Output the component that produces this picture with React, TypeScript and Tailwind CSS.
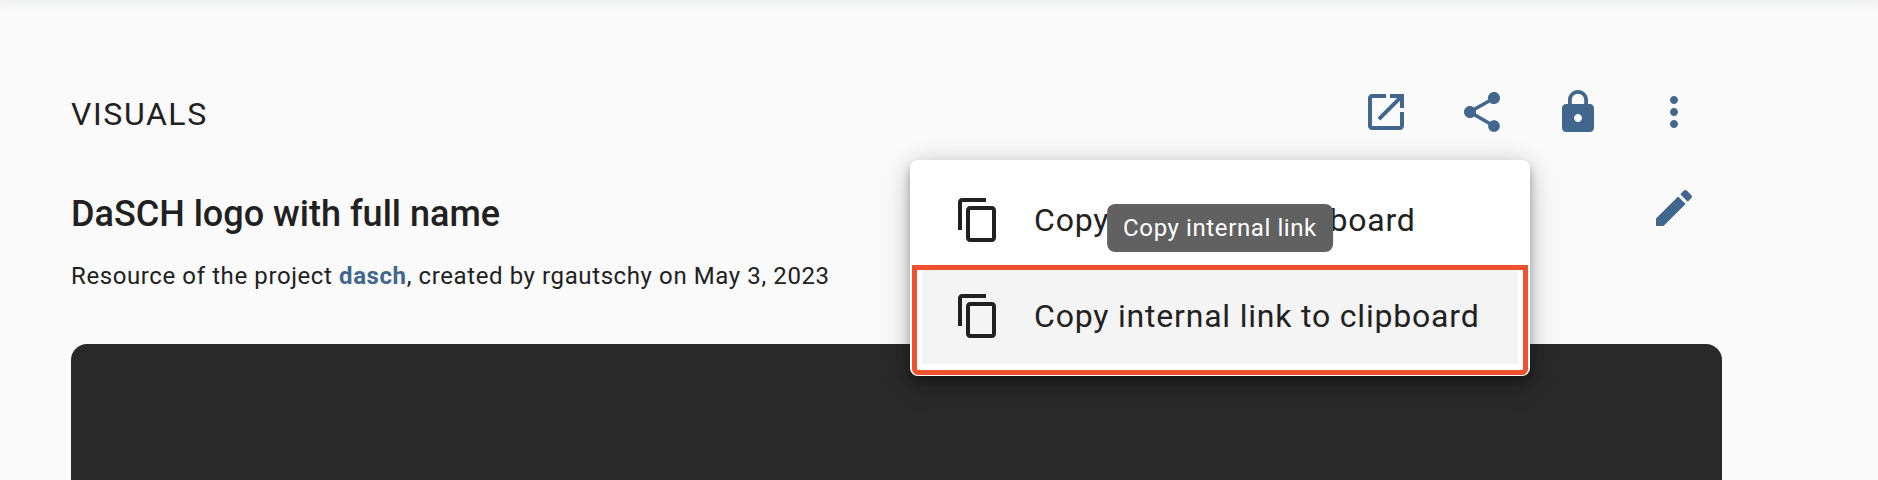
import type { ReactNode } from "react";

function Icon({ d }: { d: string }) {
  return (
    <svg viewBox="0 0 24 24" className="size-12 shrink-0 fill-current" aria-hidden="true">
      <path d={d} />
    </svg>
  );
}

const icons = {
  open: "M19 19H5V5h7V3H5c-1.11 0-2 .9-2 2v14c0 1.1.89 2 2 2h14c1.1 0 2-.9 2-2v-7h-2v7zM14 3v2h3.59l-9.83 9.83 1.41 1.41L19 6.41V10h2V3h-7z",
  share:
    "M18 16.08c-.76 0-1.44.3-1.96.77L8.91 12.7c.05-.23.09-.46.09-.7s-.04-.47-.09-.7l7.05-4.11c.54.5 1.25.81 2.04.81 1.66 0 3-1.34 3-3s-1.34-3-3-3-3 1.34-3 3c0 .24.04.47.09.7L8.04 9.81C7.5 9.31 6.79 9 6 9c-1.66 0-3 1.34-3 3s1.34 3 3 3c.79 0 1.5-.31 2.04-.81l7.12 4.16c-.05.21-.08.43-.08.65 0 1.61 1.31 2.92 2.92 2.92s2.92-1.31 2.92-2.92-1.31-2.92-2.92-2.92z",
  lock: "M18 8h-1V6c0-2.76-2.24-5-5-5S7 3.24 7 6v2H6c-1.1 0-2 .9-2 2v10c0 1.1.9 2 2 2h12c1.1 0 2-.9 2-2V10c0-1.1-.9-2-2-2zm-6 9c-1.1 0-2-.9-2-2s.9-2 2-2 2 .9 2 2-.9 2-2 2zm3.1-9H8.9V6c0-1.71 1.39-3.1 3.1-3.1 1.71 0 3.1 1.39 3.1 3.1v2z",
  more: "M12 8c1.1 0 2-.9 2-2s-.9-2-2-2-2 .9-2 2 .9 2 2 2zm0 2c-1.1 0-2 .9-2 2s.9 2 2 2 2-.9 2-2-.9-2-2-2zm0 6c-1.1 0-2 .9-2 2s.9 2 2 2 2-.9 2-2-.9-2-2-2z",
  edit: "M3 17.25V21h3.75L17.81 9.94l-3.75-3.75L3 17.25zM20.71 7.04c.39-.39.39-1.02 0-1.41l-2.34-2.34c-.39-.39-1.02-.39-1.41 0l-1.83 1.83 3.75 3.75 1.83-1.83z",
  copy: "M16 1H4c-1.1 0-2 .9-2 2v14h2V3h12V1zm3 4H8c-1.1 0-2 .9-2 2v14c0 1.1.9 2 2 2h11c1.1 0 2-.9 2-2V7c0-1.1-.9-2-2-2zm0 16H8V7h11v14z",
};

function IconButton({ label, icon }: { label: string; icon: string }) {
  return (
    <button
      type="button"
      aria-label={label}
      className="flex size-24 shrink-0 items-center justify-center text-[#41678f]"
    >
      <Icon d={icon} />
    </button>
  );
}

function MenuItem({ label, active, children }: { label: string; active?: boolean; children?: ReactNode }) {
  return (
    <div className="relative">
      <button
        type="button"
        role="menuitem"
        className={
          active
            ? "flex h-24 w-full items-center gap-8 bg-[#f4f4f4] px-8 text-[32px] tracking-wide whitespace-nowrap"
            : "flex h-24 w-full items-center gap-8 px-8 text-[32px] tracking-wide whitespace-nowrap"
        }
      >
        <Icon d={icons.copy} />
        {label}
      </button>
      {children}
    </div>
  );
}

function ShareMenu() {
  return (
    <div
      role="menu"
      className="absolute top-full right-0 z-10 min-w-[620px] rounded-lg bg-white p-3 shadow-[0_4px_8px_-2px_rgba(0,0,0,0.2),0_8px_10px_rgba(0,0,0,0.14),0_2px_20px_rgba(0,0,0,0.12),0_8px_32px_rgba(0,0,0,0.16)]"
    >
      <MenuItem label="Copy ARK url to clipboard" />
      <MenuItem label="Copy internal link to clipboard" active>
        <div className="pointer-events-none absolute -inset-x-[10px] -top-[3px] -bottom-[11px] rounded-b-md border-5 border-[#ee512d]" />
        <div
          role="tooltip"
          className="absolute bottom-full left-1/2 mb-4 flex h-12 -translate-x-1/2 items-center rounded-lg bg-[#616161] px-4 text-2xl tracking-wide whitespace-nowrap text-white"
        >
          Copy internal link
        </div>
      </MenuItem>
    </div>
  );
}

export default function App() {
  return (
    <div className="flex min-h-screen flex-col bg-[#fafafa] font-['Roboto',sans-serif] text-[#212121]">
      <header className="h-0 shadow-[0_0_10px_1px_rgba(60,70,90,0.28)]" />
      <main className="flex grow flex-col pt-16 pr-[156px] pl-[71px]">
        <div className="flex h-24 items-center">
          <span className="grow pt-1 text-[32px] tracking-wider">VISUALS</span>
          <IconButton label="Open in new tab" icon={icons.open} />
          <div className="relative">
            <IconButton label="Share" icon={icons.share} />
            <ShareMenu />
          </div>
          <IconButton label="Permissions" icon={icons.lock} />
          <IconButton label="More" icon={icons.more} />
        </div>
        <div className="flex items-start">
          <div className="grow pt-8">
            <h1 className="text-4xl leading-[44px] font-medium">DaSCH logo with full name</h1>
            <p className="pt-6 text-2xl tracking-wide">
              Resource of the project{" "}
              <a href="#dasch" className="font-bold text-[#41678f]">
                dasch
              </a>
              , created by rgautschy on May 3, 2023
            </p>
          </div>
          <IconButton label="Edit label" icon={icons.edit} />
        </div>
        <section aria-label="Image viewer" className="mt-13 grow rounded-t-2xl bg-[#292929]" />
      </main>
    </div>
  );
}
